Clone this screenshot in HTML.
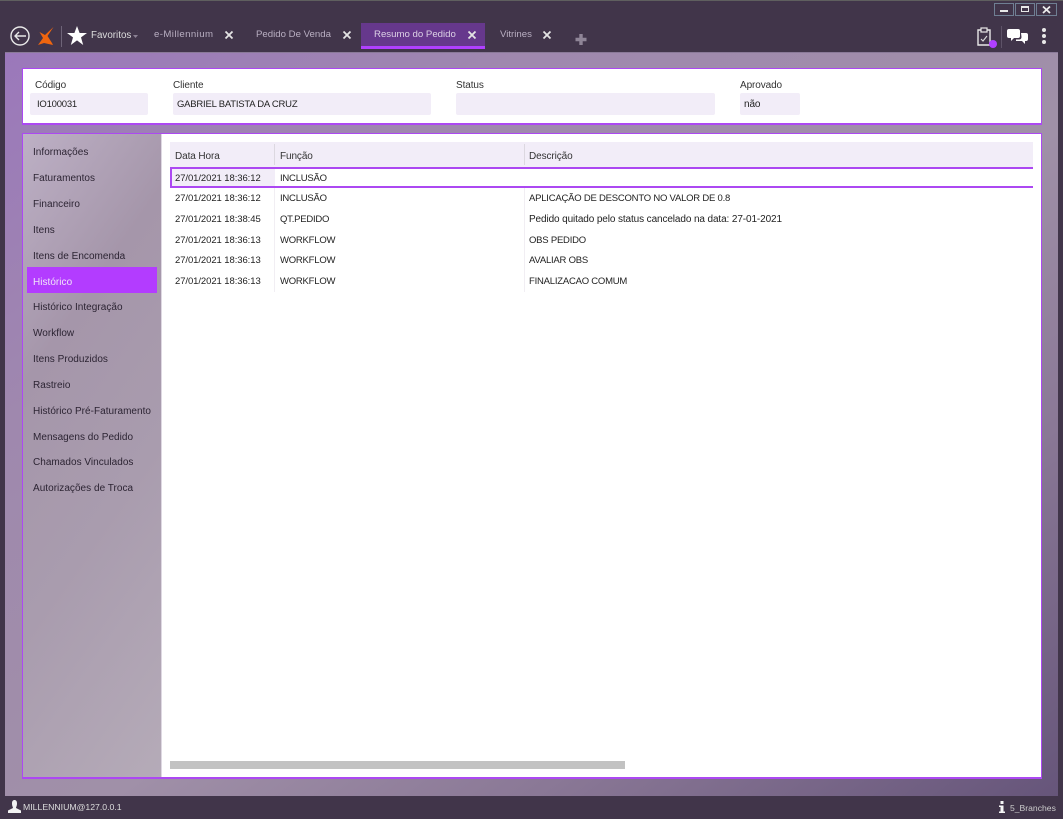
<!DOCTYPE html>
<html><head><meta charset="utf-8">
<style>
*{box-sizing:border-box;margin:0;padding:0}
html,body{width:1063px;height:819px;overflow:hidden;background:#41354a;font-family:"Liberation Sans",sans-serif;font-size:10px;color:#222}
.a{position:absolute;white-space:nowrap;line-height:14px}
.box{position:absolute;background:#f2edf8;border-radius:2px}
.tab{color:#b9afc2;font-size:9.65px}
.m{left:33px;color:#2c2433;font-size:10px;letter-spacing:.03px}
.c{color:#222;font-size:10px;letter-spacing:-.11px}
.u{color:#222;font-size:9.5px;letter-spacing:-.22px}
.d{color:#222;font-size:9.5px;letter-spacing:-.08px}
.lb{color:#333;font-size:10px;letter-spacing:-.1px}
svg{position:absolute;overflow:visible}
</style></head><body>
<div style="position:absolute;left:0;top:0;width:1063px;height:1px;background:#5f5f5f"></div>
<!-- window buttons -->
<div style="position:absolute;left:994px;top:3px;width:20px;height:13px;border:1px solid #6f7f93"></div>
<div style="position:absolute;left:1015px;top:3px;width:20px;height:13px;border:1px solid #6f7f93"></div>
<div style="position:absolute;left:1036px;top:3px;width:21px;height:13px;border:1px solid #6f7f93"></div>
<div style="position:absolute;left:1000px;top:10px;width:8px;height:2px;background:#e8e8e8"></div>
<div style="position:absolute;left:1021px;top:6px;width:8px;height:6px;border:1px solid #e8e8e8;border-top-width:2px"></div>
<svg style="left:1042px;top:6px" width="10" height="8"><path d="M1 0.5L8 7M8 0.5L1 7" stroke="#eee" stroke-width="1.8"/></svg>

<!-- back, logo, star -->
<svg style="left:10px;top:26px" width="20" height="20"><circle cx="10" cy="10" r="9" fill="none" stroke="#e8e8e8" stroke-width="1.4"/><path d="M16 10H5M9 6L5 10L9 14" fill="none" stroke="#e8e8e8" stroke-width="1.4"/></svg>
<svg style="left:38px;top:27px" width="16" height="18"><path d="M15.500 0L9.500 9L14 16L15 18L6 16L0 18L5 11L1.500 5L7 8Z" fill="#f0650e"/></svg>
<div style="position:absolute;left:61px;top:26px;width:1px;height:21px;background:#6e6478"></div>
<svg style="left:67px;top:26px" width="20" height="20"><path d="M10 0L12.600 7H20L14 11.400L16.200 19L10 14.400L3.800 19L6 11.400L0 7H7.400Z" fill="#fff"/></svg>
<div class="a" style="left:91px;top:29px;color:#ddd;font-size:9.8px">Favoritos</div>
<svg style="left:133px;top:35px" width="5" height="3"><path d="M0 0H5L2.500 3Z" fill="#8b8194"/></svg>

<!-- tabs -->
<div class="a tab" style="left:154px;top:28px;letter-spacing:.4px">e-Millennium</div>
<div class="a tab" style="left:256px;top:28px">Pedido De Venda</div>
<div style="position:absolute;left:361px;top:23px;width:124px;height:26px;background:#66388c;border-bottom:3px solid #b040ff"></div>
<div class="a tab" style="left:374px;top:28px;color:#ddd2e6">Resumo do Pedido</div>
<div class="a tab" style="left:500px;top:28px">Vitrines</div>
<svg style="left:225px;top:31px" width="8" height="8"><path d="M.5 .5L7.500 7.500M7.500 .5L.5 7.500" stroke="#e4e4e4" stroke-width="1.800"/></svg>
<svg style="left:343px;top:31px" width="8" height="8"><path d="M.5 .5L7.500 7.500M7.500 .5L.5 7.500" stroke="#e4e4e4" stroke-width="1.800"/></svg>
<svg style="left:468px;top:31px" width="8" height="8"><path d="M.5 .5L7.500 7.500M7.500 .5L.5 7.500" stroke="#e4e4e4" stroke-width="1.800"/></svg>
<svg style="left:543px;top:31px" width="8" height="8"><path d="M.5 .5L7.500 7.500M7.500 .5L.5 7.500" stroke="#e4e4e4" stroke-width="1.800"/></svg>
<svg style="left:575px;top:34px" width="12" height="12"><path d="M6 0V11M.5 5.500H11.500" stroke="#8f8597" stroke-width="3.400"/></svg>

<!-- right icons -->
<svg style="left:977px;top:27px" width="20" height="21"><path d="M4 3H1V18H13V3H10" fill="none" stroke="#e8e8e8" stroke-width="1.400"/><rect x="4" y="1" width="6" height="4" fill="#41354a" stroke="#e8e8e8" stroke-width="1.200"/><path d="M4 12L6 14L10 9" fill="none" stroke="#ddd" stroke-width="1.100"/><circle cx="16" cy="17" r="4" fill="#b040ff"/></svg>
<div style="position:absolute;left:1001px;top:26px;width:1px;height:22px;background:#5e5368"></div>
<svg style="left:1007px;top:29px" width="21" height="16"><path d="M2 0H11Q13 0 13 2V7Q13 9 11 9H7L4 12V9H2Q0 9 0 7V2Q0 0 2 0Z" fill="#fff"/><path d="M14 4H19Q21 4 21 6V10Q21 12 19 12H18V15L15 12H9V10.500H12Q14.500 10.500 14.500 8Z" fill="#fff"/></svg>
<svg style="left:1041px;top:27px" width="6" height="17"><circle cx="3" cy="3" r="2" fill="#e8e8e8"/><circle cx="3" cy="9" r="2" fill="#e8e8e8"/><circle cx="3" cy="15" r="2" fill="#e8e8e8"/></svg>

<!-- main bg -->
<div style="position:absolute;left:5px;top:52px;width:1053px;height:744px;background:linear-gradient(to bottom right,#9b78bb 0%,#9f88ae 25%,#a090a8 55%,#8a7896 75%,#66557a 100%);border-top:1px solid #8a7a98"></div>

<!-- header panel -->
<div style="position:absolute;left:22px;top:68px;width:1020px;height:57px;background:#fff;border:1px solid #ac48f2;border-bottom-width:2px"></div>
<div class="a lb" style="left:35px;top:79px">Código</div>
<div class="a lb" style="left:173px;top:79px">Cliente</div>
<div class="a lb" style="left:456px;top:79px">Status</div>
<div class="a lb" style="left:740px;top:79px">Aprovado</div>
<div class="box" style="left:30px;top:93px;width:118px;height:22px"></div>
<div class="box" style="left:173px;top:93px;width:258px;height:22px"></div>
<div class="box" style="left:456px;top:93px;width:259px;height:22px"></div>
<div class="box" style="left:740px;top:93px;width:60px;height:22px"></div>
<div class="a u" style="left:37px;top:98px">IO100031</div>
<div class="a u" style="left:177px;top:98px">GABRIEL BATISTA DA CRUZ</div>
<div class="a c" style="left:744px;top:98px">não</div>

<!-- content panel -->
<div style="position:absolute;left:22px;top:133px;width:1020px;height:646px;background:#fff;border:1px solid #ac48f2;border-bottom-width:2px"></div>
<div style="position:absolute;left:23px;top:134px;width:138px;height:643px;background:linear-gradient(125deg,#bdb0c5 0%,#a596aa 30%,#a99cae 60%,#b5abb8 100%)"></div>
<div style="position:absolute;left:161px;top:134px;width:1px;height:643px;background:#ded8e2"></div>
<div style="position:absolute;left:27px;top:267px;width:130px;height:26px;background:#b33cff"></div>
<div class="a m" style="top:146px">Informações</div>
<div class="a m" style="top:172px">Faturamentos</div>
<div class="a m" style="top:198px">Financeiro</div>
<div class="a m" style="top:224px">Itens</div>
<div class="a m" style="top:250px">Itens de Encomenda</div>
<div class="a m" style="top:276px;color:#f0e4f8">Histórico</div>
<div class="a m" style="top:301px">Histórico Integração</div>
<div class="a m" style="top:327px">Workflow</div>
<div class="a m" style="top:353px">Itens Produzidos</div>
<div class="a m" style="top:379px">Rastreio</div>
<div class="a m" style="top:405px">Histórico Pré-Faturamento</div>
<div class="a m" style="top:431px">Mensagens do Pedido</div>
<div class="a m" style="top:456px">Chamados Vinculados</div>
<div class="a m" style="top:482px">Autorizações de Troca</div>

<!-- table -->
<div style="position:absolute;left:170px;top:142px;width:863px;height:25px;background:#f2edf8"></div>
<div style="position:absolute;left:274px;top:144px;width:1px;height:21px;background:#dcd8e0"></div>
<div style="position:absolute;left:524px;top:144px;width:1px;height:21px;background:#dcd8e0"></div>
<div class="a lb" style="left:175px;top:150px">Data Hora</div>
<div class="a lb" style="left:280px;top:150px">Função</div>
<div class="a lb" style="left:529px;top:150px">Descrição</div>
<div style="position:absolute;left:170px;top:167px;width:105px;height:20px;background:#f2edf8"></div>
<div style="position:absolute;left:274px;top:187px;width:1px;height:105px;background:#f1eef3"></div>
<div style="position:absolute;left:524px;top:187px;width:1px;height:105px;background:#f1eef3"></div>
<div style="position:absolute;left:170px;top:167px;width:863px;height:21px;border:2px solid #ac48f2;border-right:0;border-left-width:2px"></div>

<div class="a d" style="left:175px;top:172px">27/01/2021 18:36:12</div><div class="a u" style="left:280px;top:172px">INCLUSÃO</div>
<div class="a d" style="left:175px;top:192px">27/01/2021 18:36:12</div><div class="a u" style="left:280px;top:192px">INCLUSÃO</div><div class="a u" style="left:529px;top:192px">APLICAÇÃO DE DESCONTO NO VALOR DE 0.8</div>
<div class="a d" style="left:175px;top:213px">27/01/2021 18:38:45</div><div class="a u" style="left:280px;top:213px">QT.PEDIDO</div><div class="a c" style="left:529px;top:213px">Pedido quitado pelo status cancelado na data: 27-01-2021</div>
<div class="a d" style="left:175px;top:234px">27/01/2021 18:36:13</div><div class="a u" style="left:280px;top:234px">WORKFLOW</div><div class="a u" style="left:529px;top:234px">OBS PEDIDO</div>
<div class="a d" style="left:175px;top:254px">27/01/2021 18:36:13</div><div class="a u" style="left:280px;top:254px">WORKFLOW</div><div class="a u" style="left:529px;top:254px">AVALIAR OBS</div>
<div class="a d" style="left:175px;top:275px">27/01/2021 18:36:13</div><div class="a u" style="left:280px;top:275px">WORKFLOW</div><div class="a u" style="left:529px;top:275px">FINALIZACAO COMUM</div>

<div style="position:absolute;left:170px;top:761px;width:455px;height:8px;background:#c2c2c2"></div>

<!-- status bar -->
<svg style="left:8px;top:800px" width="13" height="13"><path d="M4 3.500C4 1 5 0 6.500 0S9 1 9 3.500C9 6 8 7 8 8L13 10.500V13H0V10.500L5 8C5 7 4 6 4 3.500Z" fill="#f2f2f2"/></svg>
<div class="a" style="left:23px;top:800px;color:#ddd;font-size:8.700px">MILLENNIUM@127.0.0.1</div>
<svg style="left:999px;top:801px" width="6" height="12"><rect x="1.500" y="0" width="3" height="3" fill="#f5f5f5"/><path d="M0 4.500H4.500V10.500H6V12H0V10.500H1.500V6H0Z" fill="#f5f5f5"/></svg>
<div class="a" style="left:1010px;top:801px;color:#ccc;font-size:8.600px">5_Branches</div>
</body></html>
